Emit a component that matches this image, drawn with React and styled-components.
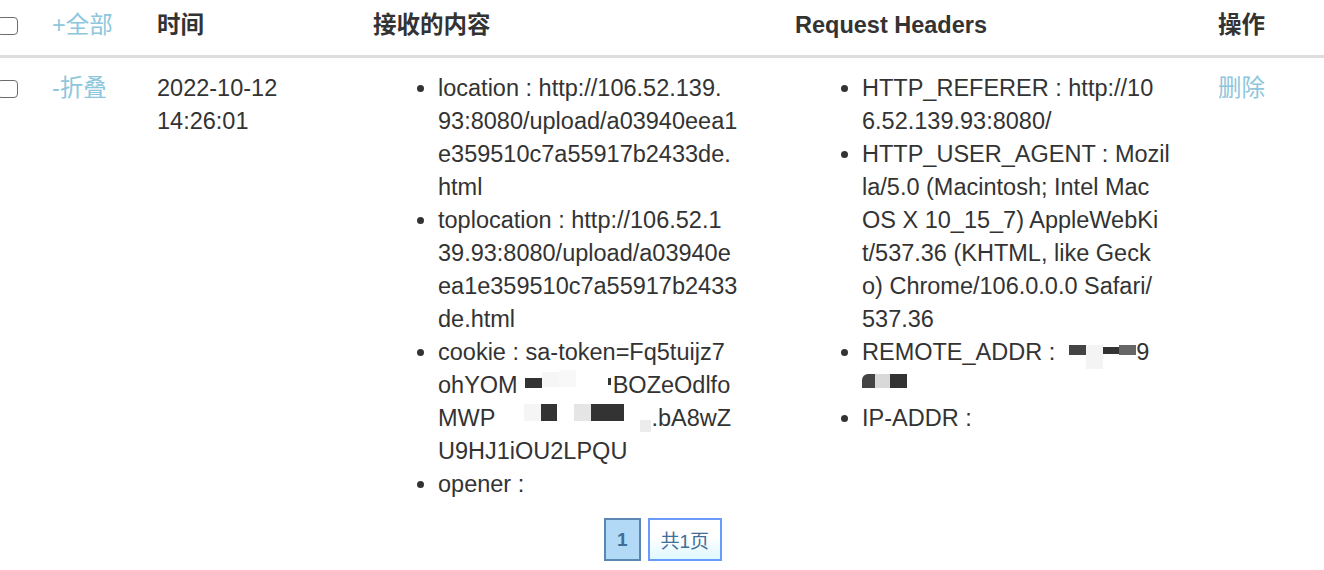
import React from "react";
import styled, { createGlobalStyle } from "styled-components";

const GlobalStyle = createGlobalStyle`
  body {
    margin: 0;
    background: #fff;
    color: #333;
    font-family: "Liberation Sans", "Noto Sans CJK SC", sans-serif;
  }
`;

const Page = styled.div`
  width: 1324px;
  overflow: hidden;
`;

const Table = styled.table`
  width: 1324px;
  border-collapse: collapse;
  table-layout: fixed;
  font-size: 23.5px;
`;

const Col = styled.col`
  width: ${(p) => p.$w}px;
`;

const Th = styled.th`
  padding: 11px 0 15px;
  line-height: 29px;
  text-align: left;
  font-weight: bold;
  vertical-align: middle;
  border-bottom: 3px solid #ddd;
`;

const Td = styled.td`
  padding: 14px 0 14px;
  line-height: 33px;
  vertical-align: top;
`;

const CheckWrap = styled.div`
  height: ${(p) => p.$h}px;
  display: flex;
  align-items: center;
`;

const Check = styled.input.attrs({ type: "checkbox" })`
  appearance: none;
  box-sizing: border-box;
  width: 21px;
  height: 18px;
  margin: 0 0 0 -3px;
  border: 1.5px solid #6c6c6c;
  border-radius: 4px;
  background: #fff;
`;

const Link = styled.a`
  color: #8dc6dd;
  font-weight: normal;
  text-decoration: none;
  cursor: pointer;
`;

const Line = styled.span`
  display: block;
  white-space: nowrap;
`;

const List = styled.ul`
  margin: 0;
  padding-left: ${(p) => p.$indent}px;
  list-style: disc;
`;

const Mosaic = styled.span`
  display: inline-flex;
  align-items: flex-start;
  vertical-align: top;
  height: 33px;
`;

const Tile = styled.span`
  flex: none;
  width: ${(p) => p.$w}px;
  height: ${(p) => p.$h}px;
  margin-top: ${(p) => p.$t}px;
  background: ${(p) => p.$c};
  border-top-left-radius: ${(p) => p.$r || 0}px;
`;

const Pager = styled.div`
  display: flex;
  justify-content: center;
  gap: 7px;
  margin-top: 3px;
  padding-left: 2px;
`;

const PageBtn = styled.span`
  box-sizing: border-box;
  height: 43px;
  padding: 0 11px;
  display: flex;
  align-items: center;
  font-size: 19px;
  color: #3f6e99;
  font-weight: ${(p) => (p.$active ? "bold" : "normal")};
  border: 2px solid ${(p) => (p.$active ? "#5b88b2" : "#6b9bf8")};
  background: ${(p) =>
    p.$active ? "#b2daf6" : "linear-gradient(#ffffff, #ffffff 45%, #dff8ff)"};
`;

// [width, colour, top, height, radius]
const tilesCookieA = [
  [7, "transparent", 0, 1],
  [17, "#333", 8.5, 10],
  [17, "#f6f6f6", 3, 15],
  [17, "#f8f8f8", 1, 17],
  [32, "transparent", 0, 1],
  [3, "#333", 9, 7],
  [2, "transparent", 0, 1],
];

const tilesCookieB = [
  [29, "transparent", 0, 1],
  [17, "#f5f5f5", 1.5, 17],
  [16, "#333", 1.5, 17],
  [17, "transparent", 0, 1],
  [17, "#e5e5e5", 1.5, 17],
  [33, "#333", 1.5, 17],
  [16, "transparent", 0, 1],
  [11, "#ececec", 18, 12],
];

const tilesRemoteA = [
  [14, "transparent", 0, 1],
  [17, "#444", 8.5, 10],
  [17, "#f4f4f4", 8.5, 24],
  [16, "#333", 11, 7],
  [17, "#666", 8.5, 10],
];

const tilesRemoteB = [
  [13, "#444", 4.5, 14, 6],
  [15, "#d9d9d9", 4.5, 14],
  [17, "#333", 4.5, 14],
];

const Blur = ({ tiles }) => (
  <Mosaic>
    {tiles.map(([w, c, t, h, r], i) => (
      <Tile key={i} $w={w} $c={c} $t={t} $h={h} $r={r} />
    ))}
  </Mosaic>
);

const received = [
  ["location : http://106.52.139.", "93:8080/upload/a03940eea1", "e359510c7a55917b2433de.", "html"],
  ["toplocation : http://106.52.1", "39.93:8080/upload/a03940e", "ea1e359510c7a55917b2433", "de.html"],
  [
    "cookie : sa-token=Fq5tuijz7",
    <>ohYOM<Blur tiles={tilesCookieA} />BOZeOdlfo</>,
    <>MWP<Blur tiles={tilesCookieB} />.bA8wZ</>,
    "U9HJ1iOU2LPQU",
  ],
  ["opener :"],
];

const headers = [
  ["HTTP_REFERER : http://10", "6.52.139.93:8080/"],
  [
    "HTTP_USER_AGENT : Mozil",
    "la/5.0 (Macintosh; Intel Mac",
    "OS X 10_15_7) AppleWebKi",
    "t/537.36 (KHTML, like Geck",
    "o) Chrome/106.0.0.0 Safari/",
    "537.36",
  ],
  [
    <>REMOTE_ADDR :<Blur tiles={tilesRemoteA} />9</>,
    <Blur tiles={tilesRemoteB} />,
  ],
  ["IP-ADDR :"],
];

const Items = ({ items, indent }) => (
  <List $indent={indent}>
    {items.map((lines, i) => (
      <li key={i}>
        {lines.map((l, j) => (
          <Line key={j}>{l}</Line>
        ))}
      </li>
    ))}
  </List>
);

export default function App() {
  return (
    <Page>
      <GlobalStyle />
      <Table>
        <colgroup>
          <Col $w={52} />
          <Col $w={105} />
          <Col $w={216} />
          <Col $w={422} />
          <Col $w={423} />
          <Col $w={106} />
        </colgroup>
        <thead>
          <tr>
            <Th>
              <CheckWrap $h={29}>
                <Check />
              </CheckWrap>
            </Th>
            <Th>
              <Link>+全部</Link>
            </Th>
            <Th>时间</Th>
            <Th>接收的内容</Th>
            <Th>Request Headers</Th>
            <Th>操作</Th>
          </tr>
        </thead>
        <tbody>
          <tr>
            <Td>
              <CheckWrap $h={33}>
                <Check />
              </CheckWrap>
            </Td>
            <Td>
              <Link>-折叠</Link>
            </Td>
            <Td>
              <Line>2022-10-12</Line>
              <Line>14:26:01</Line>
            </Td>
            <Td>
              <Items items={received} indent={65} />
            </Td>
            <Td>
              <Items items={headers} indent={67} />
            </Td>
            <Td>
              <Link>删除</Link>
            </Td>
          </tr>
        </tbody>
      </Table>
      <Pager>
        <PageBtn $active>1</PageBtn>
        <PageBtn>共1页</PageBtn>
      </Pager>
    </Page>
  );
}
